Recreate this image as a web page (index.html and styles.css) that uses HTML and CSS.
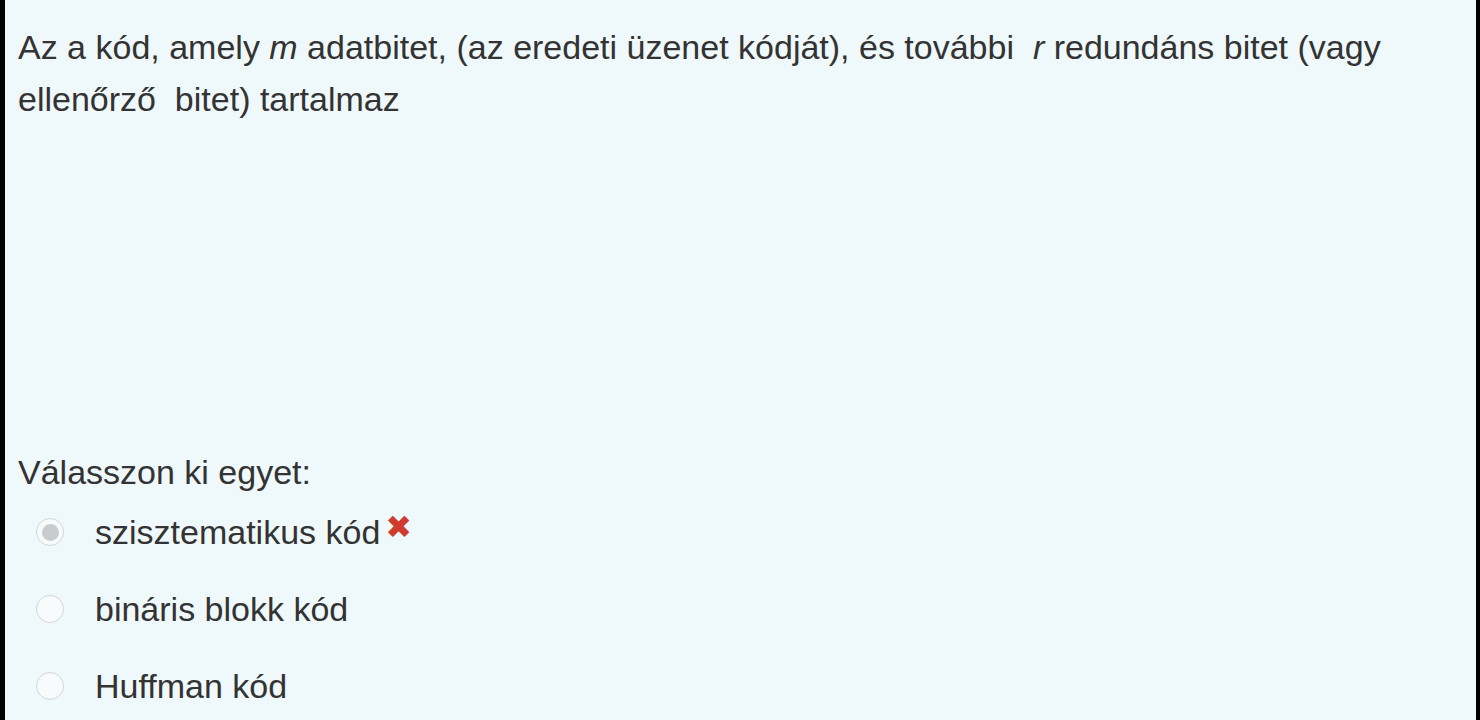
FILE: index.html
```html
<!DOCTYPE html>
<html lang="hu">
<head>
<meta charset="utf-8">
<link rel="stylesheet" href="styles.css">
<title>Kérdés</title>
</head>
<body>
<div class="frame">
  <div class="formulation">
    <div class="qtext">Az a kód, amely <em>m</em> adatbitet, (az eredeti üzenet kódját), és további&nbsp; <em>r</em> redundáns bitet (vagy ellenőrző&nbsp; bitet) tartalmaz</div>
    <div class="ablock">
      <div class="prompt">Válasszon ki egyet:</div>
      <div class="answer">
        <div class="opt">
          <span class="radio checked"></span>
          <span class="label">szisztematikus kód</span>
          <span class="cross">✖</span>
        </div>
        <div class="opt">
          <span class="radio"></span>
          <span class="label">bináris blokk kód</span>
        </div>
        <div class="opt">
          <span class="radio"></span>
          <span class="label">Huffman kód</span>
        </div>
      </div>
    </div>
  </div>
</div>
</body>
</html>
```
FILE: styles.css
```css
html, body {
  margin: 0;
  padding: 0;
  background: #000;
}
.frame {
  height: 720px;
  margin: 0 4px 0 5px;
  background: #eff8fb;
  overflow: hidden;
}
.formulation {
  padding: 21px 60px 0 13px;
  font-family: "Liberation Sans", Arial, sans-serif;
  font-size: 34px;
  line-height: 50px;
  color: #333;
}
.qtext {
  line-height: 52px;
}
.qtext em {
  font-style: italic;
}
.ablock {
  margin-top: 322px;
}
.answer {
  margin-top: 10px;
  display: flex;
  flex-direction: column;
  gap: 27px;
}
.opt {
  display: flex;
  align-items: center;
  padding-left: 18px;
}
.radio {
  width: 28px;
  height: 28px;
  border: 1.5px solid #d3d6d8;
  border-radius: 50%;
  background: #f7fbfc;
  box-sizing: border-box;
  display: flex;
  align-items: center;
  justify-content: center;
  margin-right: 31px;
}
.radio.checked::after {
  content: "";
  width: 17px;
  height: 17px;
  border-radius: 50%;
  background: #c9cccd;
}
.cross {
  color: #d03b30;
  font-family: "DejaVu Sans", sans-serif;
  font-size: 32px;
  margin-left: 5px;
  position: relative;
  top: -5px;
}
```
